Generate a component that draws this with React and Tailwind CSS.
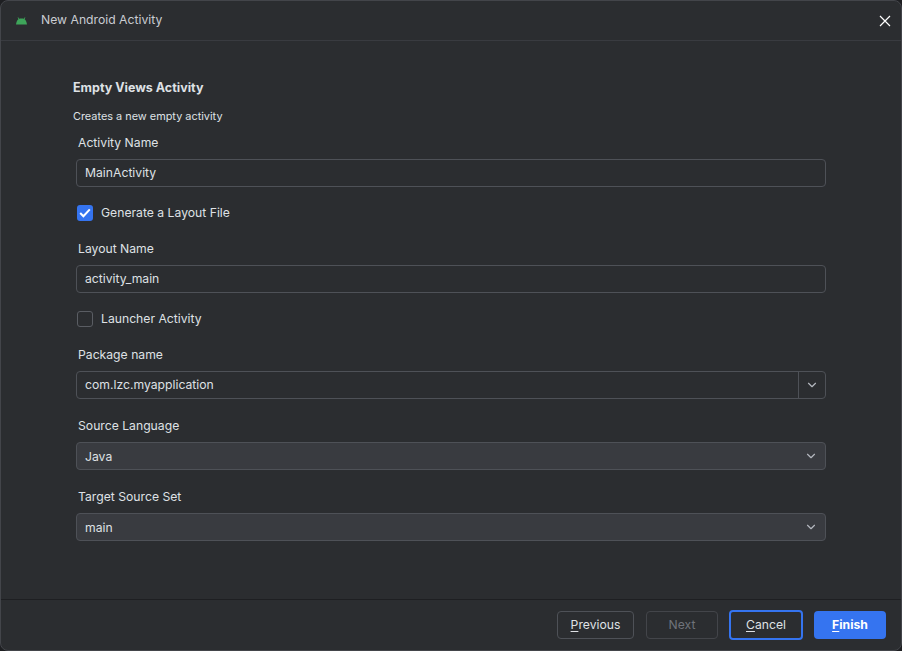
import { ChevronDown } from 'lucide-react';

function FieldLabel({ children, className = '' }) {
  return <div className={`pl-[2px] h-[16px] leading-[16px] text-[12.2px] text-[#dfe1e5] ${className}`}>{children}</div>;
}

function TextInput({ value }) {
  return (
    <div className="mt-[8px] h-[28px] flex items-center rounded-[4px] border border-[#4e5157] pl-[8px] text-[12.2px] text-[#dfe1e5]">
      {value}
    </div>
  );
}

function CheckRow({ checked, label, className = '' }) {
  return (
    <div className={`flex items-center h-[16px] pl-[1px] ${className}`}>
      <span
        className={`w-[16px] h-[16px] rounded-[3px] flex items-center justify-center ${
          checked ? 'bg-[#3574f0]' : 'border border-[#5a5d63]'
        }`}
      >
        {checked && (
          <svg width="12" height="10" viewBox="0 0 12 10" fill="none" stroke="#ffffff" strokeWidth="2">
            <path d="M1.2 5 L4.4 8.2 L10.8 1.4" />
          </svg>
        )}
      </span>
      <span className="ml-[8px] text-[12.2px] text-[#dfe1e5]">{label}</span>
    </div>
  );
}

function ComboBox({ value }) {
  return (
    <div className="mt-[8px] h-[28px] flex items-center justify-between rounded-[4px] border border-[#4e5157] bg-[#393b40] pl-[8px] pr-[7px] text-[12.2px] text-[#dfe1e5]">
      <span className="pt-[2px]">{value}</span>
      <ChevronDown size={14} color="#b4b8bf" />
    </div>
  );
}

function FooterButton({ mnemonic, rest, className = '' }) {
  return (
    <button className={`h-[28px] rounded-[4px] text-[12.2px] flex items-center justify-center ${className}`}>
      <span>
        <span className="underline underline-offset-2">{mnemonic}</span>
        {rest}
      </span>
    </button>
  );
}

export default function App() {
  return (
    <div
      className="w-[902px] h-[651px] flex flex-col bg-[#1e1f22]"
      style={{ fontFamily: 'Inter, "Noto Sans", sans-serif' }}
    >
      <div className="flex-1 flex flex-col rounded-[8px] border border-[#43454a] bg-[#2b2d30] overflow-hidden">
        <header className="h-[40px] shrink-0 flex items-center border-b border-[#393b40] pl-[15px] pr-[10px]">
          <svg width="11" height="8" viewBox="0 0 11 8" fill="#3ea55a">
            <path d="M0 7.5 C0.3 5 1.2 3 2.4 2.3 L1.6 0.6 L2.2 0.2 L3.1 1.8 C4.2 1.4 6.8 1.4 7.9 1.8 L8.8 0.2 L9.4 0.6 L8.6 2.3 C9.8 3 10.7 5 11 7.5 Z" />
          </svg>
          <span className="ml-[14px] text-[12.2px] text-[#c9ccd2]">New Android Activity</span>
          <svg width="12" height="12" viewBox="0 0 12 12" stroke="#ffffff" strokeWidth="1.2" className="ml-auto">
            <path d="M1 1 L11 11 M11 1 L1 11" />
          </svg>
        </header>

        <main className="flex-1 pt-[39px] pl-[72px] pr-[75px]">
          <h1 className="h-[16px] leading-[16px] text-[12.5px] font-bold text-[#dfe1e5]">Empty Views Activity</h1>
          <p className="mt-[12px] h-[16px] leading-[16px] text-[10.9px] text-[#dfe1e5]">Creates a new empty activity</p>
          <div className="pl-[3px]">
            <FieldLabel className="mt-[11px]">Activity Name</FieldLabel>
            <TextInput value="MainActivity" />
            <CheckRow checked label="Generate a Layout File" className="mt-[18px]" />
            <FieldLabel className="mt-[20px]">Layout Name</FieldLabel>
            <TextInput value="activity_main" />
            <CheckRow label="Launcher Activity" className="mt-[18px]" />
            <FieldLabel className="mt-[20px]">Package name</FieldLabel>
            <div className="mt-[8px] h-[28px] flex items-center rounded-[4px] border border-[#4e5157] text-[12.2px] text-[#dfe1e5]">
              <span className="flex-1 pl-[8px]">com.lzc.myapplication</span>
              <span className="w-[27px] h-full flex items-center justify-center border-l border-[#4e5157]">
                <ChevronDown size={14} color="#b4b8bf" />
              </span>
            </div>
            <FieldLabel className="mt-[19px]">Source Language</FieldLabel>
            <ComboBox value="Java" />
            <FieldLabel className="mt-[19px]">Target Source Set</FieldLabel>
            <ComboBox value="main" />
          </div>
        </main>

        <footer className="h-[51px] shrink-0 flex items-center justify-end border-t border-[#1e1f22] pr-[15px]">
          <FooterButton mnemonic="P" rest="revious" className="w-[77px] mr-[12px] border border-[#4e5157] text-[#dfe1e5]" />
          <FooterButton mnemonic="" rest="Next" className="w-[72px] mr-[11px] border border-[#43454a] text-[#6f737a]" />
          <FooterButton mnemonic="C" rest="ancel" className="w-[74px] h-[30px] mr-[11px] border-2 border-[#3574f0] text-[#dfe1e5]" />
          <FooterButton mnemonic="F" rest="inish" className="w-[72px] bg-[#3574f0] text-white font-bold" />
        </footer>
      </div>
    </div>
  );
}
